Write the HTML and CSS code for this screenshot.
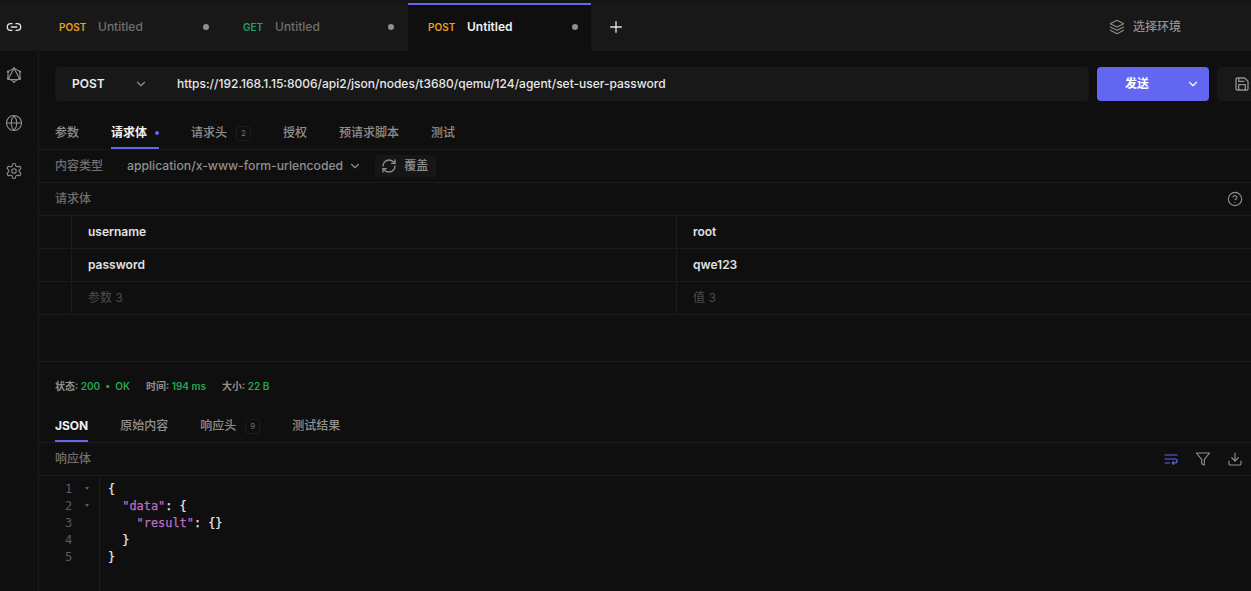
FILE: index.html
```html
<!DOCTYPE html>
<html lang="zh">
<head>
<meta charset="utf-8">
<title>Hoppscotch</title>
<link rel="stylesheet" href="styles.css">
</head>
<body>
<div class="app">
  <header class="topbar">
    <div class="link-cell">
      <svg class="ico bright" viewBox="0 0 24 24" width="16" height="16"><path d="M9 17H7A5 5 0 0 1 7 7h2"/><path d="M15 7h2a5 5 0 1 1 0 10h-2"/><line x1="8" y1="12" x2="16" y2="12"/></svg>
    </div>
    <div class="tab t1"><span class="m post">POST</span><span class="tname">Untitled</span><span class="dot"></span></div>
    <div class="tab t2"><span class="m get">GET</span><span class="tname">Untitled</span><span class="dot"></span></div>
    <div class="tab t3 active"><span class="m post">POST</span><span class="tname">Untitled</span><span class="dot"></span></div>
    <div class="plus"><svg class="ico bright" viewBox="0 0 24 24" width="16" height="16"><path d="M12 4v16M4 12h16"/></svg></div>
    <div class="env">
      <svg class="ico" viewBox="0 0 24 24" width="16" height="16"><path d="M12 2 2 7l10 5 10-5-10-5z"/><path d="m2 12 10 5 10-5"/><path d="m2 17 10 5 10-5"/></svg>
      <span>选择环境</span>
    </div>
  </header>
  <div class="body">
    <nav class="side">
      <svg class="ico" viewBox="0 0 24 24" width="18" height="18"><path d="M12 3 20 18H4z"/><path d="M12 3 20 7.500V16.500L12 21 4 16.500V7.500z"/><circle class="fill" cx="12" cy="3" r="1.500"/><circle class="fill" cx="20" cy="7.500" r="1.500"/><circle class="fill" cx="20" cy="16.500" r="1.500"/><circle class="fill" cx="12" cy="21" r="1.500"/><circle class="fill" cx="4" cy="16.500" r="1.500"/><circle class="fill" cx="4" cy="7.500" r="1.500"/></svg>
      <svg class="ico" viewBox="0 0 24 24" width="18" height="18"><circle cx="12" cy="12" r="10"/><path d="M2 12h20"/><path d="M12 2a15 15 0 0 1 0 20 15 15 0 0 1 0-20z"/></svg>
      <svg class="ico" viewBox="0 0 24 24" width="18" height="18"><path d="M12.220 2h-.440a2 2 0 0 0-2 2v.180a2 2 0 0 1-1 1.730l-.430.250a2 2 0 0 1-2 0l-.150-.080a2 2 0 0 0-2.730.730l-.220.380a2 2 0 0 0 .730 2.730l.150.100a2 2 0 0 1 1 1.720v.510a2 2 0 0 1-1 1.740l-.150.090a2 2 0 0 0-.730 2.730l.220.380a2 2 0 0 0 2.730.730l.150-.080a2 2 0 0 1 2 0l.430.250a2 2 0 0 1 1 1.730V20a2 2 0 0 0 2 2h.440a2 2 0 0 0 2-2v-.180a2 2 0 0 1 1-1.730l.430-.250a2 2 0 0 1 2 0l.150.080a2 2 0 0 0 2.730-.730l.220-.390a2 2 0 0 0-.730-2.730l-.150-.080a2 2 0 0 1-1-1.740v-.500a2 2 0 0 1 1-1.740l.150-.090a2 2 0 0 0 .730-2.730l-.220-.380a2 2 0 0 0-2.730-.730l-.150.080a2 2 0 0 1-2 0l-.430-.250a2 2 0 0 1-1-1.730V4a2 2 0 0 0-2-2z"/><circle cx="12" cy="12" r="3"/></svg>
    </nav>
    <main class="main">
      <section class="reqbar">
        <div class="urlbox">
          <div class="method"><span>POST</span><svg class="ico" viewBox="0 0 24 24" width="14" height="14"><path d="m6 9 6 6 6-6"/></svg></div>
          <div class="url">https://192.168.1.15:8006/api2/json/nodes/t3680/qemu/124/agent/set-user-password</div>
        </div>
        <div class="send"><span>发送</span><svg class="ico white" viewBox="0 0 24 24" width="14" height="14"><path d="m6 9 6 6 6-6"/></svg></div>
        <div class="save"><svg class="ico" viewBox="0 0 24 24" width="16" height="16"><path d="M19 21H5a2 2 0 0 1-2-2V5a2 2 0 0 1 2-2h11l5 5v11a2 2 0 0 1-2 2z"/><path d="M17 21v-8H7v8"/><path d="M7 3v5h8"/></svg></div>
      </section>
      <div class="tabs">
        <div class="stab">参数</div>
        <div class="stab on">请求体<i class="pdot"></i></div>
        <div class="stab">请求头<b class="badge">2</b></div>
        <div class="stab">授权</div>
        <div class="stab">预请求脚本</div>
        <div class="stab">测试</div>
      </div>
      <div class="ctype">
        <span class="label">内容类型</span>
        <span class="ctval">application/x-www-form-urlencoded</span>
        <svg class="ico" viewBox="0 0 24 24" width="14" height="14"><path d="m6 9 6 6 6-6"/></svg>
        <div class="override">
          <svg class="ico" viewBox="0 0 24 24" width="16" height="16"><path d="M3 12a9 9 0 0 1 9-9 9.750 9.750 0 0 1 6.740 2.740L21 8"/><path d="M21 3v5h-5"/><path d="M21 12a9 9 0 0 1-9 9 9.750 9.750 0 0 1-6.740-2.740L3 16"/><path d="M8 16H3v5"/></svg>
          <span>覆盖</span>
        </div>
      </div>
      <div class="titlerow">
        <span class="label">请求体</span>
        <svg class="ico" viewBox="0 0 24 24" width="16" height="16"><circle cx="12" cy="12" r="10"/><path d="M9.090 9a3 3 0 0 1 5.830 1c0 2-3 3-3 3"/><path d="M12 17h.010"/></svg>
      </div>
      <div class="kv">
        <div class="row"><div class="handle"></div><div class="k">username</div><div class="v">root</div></div>
        <div class="row"><div class="handle"></div><div class="k">password</div><div class="v">qwe123</div></div>
        <div class="row ph"><div class="handle"></div><div class="k">参数 3</div><div class="v">值 3</div></div>
      </div>
      <div class="spacer"></div>
      <div class="status">
        <span>状态: <em>200 &nbsp;•&nbsp; OK</em></span>
        <span>时间: <em>194 ms</em></span>
        <span>大小: <em>22 B</em></span>
      </div>
      <div class="tabs">
        <div class="stab on json">JSON</div>
        <div class="stab">原始内容</div>
        <div class="stab">响应头<b class="badge">9</b></div>
        <div class="stab">测试结果</div>
      </div>
      <div class="titlerow">
        <span class="label">响应体</span>
        <div class="tools">
          <svg class="ico accent" viewBox="0 0 24 24" width="16" height="16"><path d="M3 6h18"/><path d="M3 12h15a3 3 0 1 1 0 6h-4"/><path d="m16 16-2 2 2 2"/><path d="M3 18h7"/></svg>
          <svg class="ico" viewBox="0 0 24 24" width="16" height="16"><path d="M22 3H2l8 9.460V19l4 2v-8.540L22 3z"/></svg>
          <svg class="ico" viewBox="0 0 24 24" width="16" height="16"><path d="M21 15v4a2 2 0 0 1-2 2H5a2 2 0 0 1-2-2v-4"/><path d="m7 10 5 5 5-5"/><path d="M12 15V3"/></svg>
        </div>
      </div>
      <div class="code">
        <div class="gutter">
          <div class="ln"><span>1</span><i></i></div>
          <div class="ln"><span>2</span><i></i></div>
          <div class="ln"><span>3</span></div>
          <div class="ln"><span>4</span></div>
          <div class="ln"><span>5</span></div>
        </div>
        <div class="src">
          <div class="cl">{</div>
          <div class="cl i1"><span class="key">"data"</span><span>: {</span></div>
          <div class="cl i2"><span class="key">"result"</span><span>: {}</span></div>
          <div class="cl i1">}</div>
          <div class="cl">}</div>
        </div>
      </div>
    </main>
  </div>
</div>
</body>
</html>
```
FILE: styles.css
```css
* { box-sizing: border-box; }
html, body { margin: 0; height: 100%; overflow: hidden; }
body {
  background: #0f0f0f;
  color: #e2e2e2;
  font: 500 12px/16px Inter, "Noto Sans CJK SC", sans-serif;
}
.app { width: 1251px; height: 591px; display: flex; flex-direction: column; overflow: hidden; }
.ico { fill: none; stroke: #8f8f8f; stroke-width: 2; stroke-linecap: round; stroke-linejoin: round; flex: none; display: block; }
.ico .fill { fill: #8f8f8f; stroke: none; }
.ico.bright { stroke: #e4e4e4; }
.ico.white { stroke: #fff; }
.ico.accent { stroke: #6366f1; }

.topbar { height: 51px; flex: none; display: flex; align-items: stretch; background: #181818; border-top: 3px solid #141414; }
.link-cell { width: 28px; flex: none; display: flex; align-items: center; justify-content: center; }
.tab { flex: none; display: flex; align-items: center; font-size: 12px; color: #6f6f6f; }
.t1 { width: 196px; padding-left: 31px; }
.t2 { width: 184px; padding-left: 19px; }
.t3 { width: 183px; padding-left: 20px; }
.m { font-size: 10px; font-weight: 600; width: 39px; }
.t2 .m { width: 32px; }
.post { color: #e8a020; }
.get { color: #22a06b; }
.dot { width: 6px; height: 6px; border-radius: 50%; background: #8f8f8f; margin-left: auto; }
.t1 .dot { margin-right: 15px; }
.t2 .dot { margin-right: 14px; }
.t3 .dot { margin-right: 13px; }
.tab.active { background: #0f0f0f; border-top: 2px solid #6366f1; padding-bottom: 2px; color: #f2f2f2; font-weight: 600; }
.plus { width: 50px; flex: none; display: flex; align-items: center; justify-content: center; }
.env { margin-left: auto; width: 142px; display: flex; align-items: center; gap: 8px; color: #8f8f8f; }
.env .ico { stroke-width: 1.600; }

.body { flex: 1; display: flex; min-height: 0; }
.side { width: 39px; flex: none; border-right: 1px solid #1b1b1b; display: flex; flex-direction: column; align-items: center; padding: 15px 10px 0 0; gap: 30px; }
.side .ico { stroke-width: 1.500; }
.main { flex: 1; min-width: 0; display: flex; flex-direction: column; overflow: hidden; }

.reqbar { display: flex; gap: 8px; padding: 16px 0 0 16px; height: 64px; flex: none; }
.urlbox { width: 1034px; height: 34px; flex: none; background: #181818; border-radius: 4px; display: flex; align-items: center; }
.method { width: 122px; padding: 0 29px 0 17px; display: flex; align-items: center; justify-content: space-between; font-weight: 600; color: #ededed; }
.url { color: #e8e8e8; }
.send { width: 112px; height: 34px; flex: none; background: #6366f1; border-radius: 4px; color: #fff; display: flex; align-items: center; justify-content: space-between; padding: 0 9px 0 28px; font-weight: 700; }
.save { width: 60px; height: 34px; flex: none; background: #181818; border-radius: 4px; padding: 9px 0 0 17px; }

.tabs { height: 35px; flex: none; display: flex; gap: 32px; padding-left: 16px; border-bottom: 1px solid #1b1b1b; }
.stab { height: 34px; padding-top: 2px; display: flex; align-items: center; color: #8f8f8f; }
.stab.on { color: #f0f0f0; font-weight: 700; border-bottom: 2px solid #6366f1; padding-top: 4px; }
.pdot { display: block; width: 4px; height: 4px; border-radius: 50%; background: #6366f1; margin-left: 8px; }
.badge { display: flex; align-items: center; justify-content: center; width: 15px; height: 15px; margin-left: 9px; font-size: 8px; font-weight: 400; color: #6f6f6f; border: 1px solid #1c1c1c; border-radius: 3px; }
.label { color: #6f6f6f; }

.ctype { height: 33px; flex: none; display: flex; align-items: center; padding-left: 16px; border-bottom: 1px solid #1b1b1b; }
.ctval { margin: 0 5px 0 24px; color: #8f8f8f; font-size: 12.200px; }
.override { margin-left: 13px; height: 23px; padding: 0 8px 0 6px; display: flex; align-items: center; gap: 7px; background: #161616; border-radius: 4px; color: #8f8f8f; }

.titlerow { height: 33px; flex: none; display: flex; align-items: center; justify-content: space-between; padding: 0 8px 0 16px; border-bottom: 1px solid #1b1b1b; }
.titlerow .ico { stroke-width: 1.700; }

.row { height: 33px; display: flex; border-bottom: 1px solid #1b1b1b; font-weight: 600; color: #e2e2e2; }
.handle { width: 33px; flex: none; border-right: 1px solid #1b1b1b; }
.k { width: 605px; flex: none; padding-left: 16px; display: flex; align-items: center; border-right: 1px solid #1b1b1b; }
.v { flex: 1; padding-left: 16px; display: flex; align-items: center; }
.row.ph { color: #4c4c4c; font-weight: 400; }
.spacer { height: 47px; flex: none; border-bottom: 1px solid #1b1b1b; }

.status { height: 46px; flex: none; padding: 2px 0 0 16px; display: flex; align-items: center; gap: 16px; font-size: 10px; font-weight: 600; color: #8f8f8f; }
.status em { font-style: normal; color: #22a652; }

.tools { display: flex; gap: 16px; }
.code { flex: 1; display: flex; min-height: 0; }
.gutter { width: 61px; flex: none; border-right: 1px solid #1b1b1b; padding-top: 5px; }
.ln { height: 17px; font: 400 12px/17px "DejaVu Sans Mono", monospace; color: #5c5c5c; position: relative; padding-left: 26px; }
.ln i { position: absolute; left: 46px; top: 6px; width: 0; height: 0; border: 2.500px solid transparent; border-top: 3px solid #5c5c5c; border-bottom: 0; }
.src { padding: 5px 0 0 8px; font: 400 11.900px/17px "DejaVu Sans Mono", monospace; color: #e8e8e8; -webkit-text-stroke: 0.25px currentColor; }
.cl { height: 17px; white-space: pre; }
.i1 { padding-left: 14.300px; }
.i2 { padding-left: 28.600px; }
.key { color: #c06cc8; }
```
